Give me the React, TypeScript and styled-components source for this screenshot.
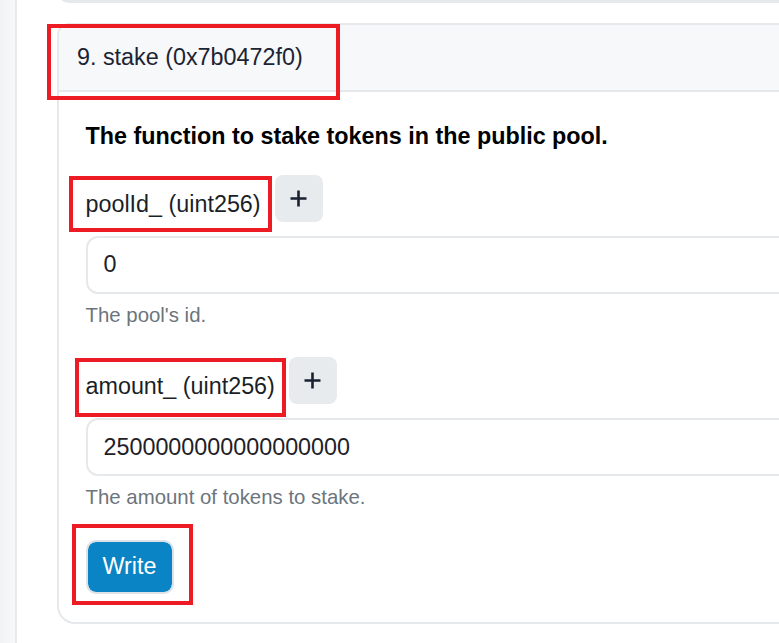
import React from "react";
import styled, { createGlobalStyle } from "styled-components";

const GlobalStyle = createGlobalStyle`
  html, body {
    margin: 0;
    padding: 0;
    overflow: hidden;
    background: linear-gradient(to right, #f2f3f5 0px, #f7f8f9 15px);
    font-family: "Liberation Sans", Arial, sans-serif;
  }
  * { box-sizing: border-box; }
`;

const Page = styled.div`
  display: flex;
  min-height: 643px;
`;

const Panel = styled.main`
  margin-left: 15px;
  border-left: 2px solid #e7e9ec;
  background: #ffffff;
  padding-left: 40px;
  width: 1200px;
  flex-shrink: 0;
  min-height: 643px;
  display: flex;
  flex-direction: column;
  gap: 20px;
`;

const PrevCard = styled.section`
  height: 40px;
  margin-top: -37px;
  flex-shrink: 0;
  border: 2px solid #e6e9ec;
  border-radius: 0 0 12px 12px;
  background: #e6e9ec;
`;

const Card = styled.section`
  border: 2px solid #e6e9ec;
  border-radius: 12px 12px 18px 18px;
  background: #ffffff;
  flex-shrink: 0;
`;

const NextCard = styled.section`
  height: 80px;
  flex-shrink: 0;
  border: 2px solid #e6e9ec;
  border-radius: 12px 12px 0 0;
  background: #f7f8fa;
`;

const CardHeader = styled.header`
  background: #f7f8fa;
  border-bottom: 2px solid #e6e9ec;
  border-radius: 10px 10px 0 0;
  padding: 18px 18px 19px;
  font-size: 23.33px;
  line-height: 28px;
  color: #1c2332;
`;

const Marked = styled.span<{ $t: number; $r: number; $b: number; $l: number }>`
  position: relative;
  display: inline-flex;
  &::after {
    content: "";
    position: absolute;
    top: ${(p) => p.$t}px;
    right: ${(p) => p.$r}px;
    bottom: ${(p) => p.$b}px;
    left: ${(p) => p.$l}px;
    border: 4px solid #ed1c24;
    pointer-events: none;
  }
`;

const Title = styled.span`
  display: block;
`;

const CardBody = styled.div`
  padding: 26.5px 27px 28px 26.5px;
  display: flex;
  flex-direction: column;
  align-items: stretch;
`;

const Description = styled.p`
  margin: 0 0 21px;
  font-size: 23.33px;
  line-height: 35px;
  font-weight: 700;
  color: #000000;
`;

const ParamGroup = styled.div`
  display: flex;
  flex-direction: column;
  margin-bottom: 27px;
`;

const ParamHead = styled.div`
  display: flex;
  align-items: flex-end;
  gap: 14px;
`;

const Label = styled.label`
  display: block;
  font-size: 23.33px;
  line-height: 35px;
  color: #1b1f27;
  white-space: nowrap;
`;

const AddButton = styled.button`
  width: 48px;
  height: 47px;
  border: 0;
  border-radius: 8px;
  background: #e8ebee;
  display: grid;
  place-items: center;
  padding: 0;
  color: #1a2130;
`;

const Field = styled.input`
  margin-top: 14px;
  height: 58px;
  width: 100%;
  border: 2px solid #e6e9ec;
  border-radius: 12px;
  padding: 0 16px;
  font-family: "Liberation Sans", Arial, sans-serif;
  font-size: 23.33px;
  color: #1e2127;
  background: #ffffff;
  outline: none;
`;

const Hint = styled.div`
  margin-top: 6px;
  font-size: 20.4px;
  line-height: 30.6px;
  color: #6c757d;
`;

const ActionRow = styled.div`
  display: flex;
  align-items: flex-start;
`;

const WriteButton = styled.button`
  display: block;
  width: 88px;
  height: 54px;
  padding: 0;
  border: 2px solid #dde2e7;
  border-radius: 10px;
  background: #0a84c4;
  background-clip: padding-box;
  color: #ffffff;
  font-family: "Liberation Sans", Arial, sans-serif;
  font-size: 23.33px;
  line-height: 1;
`;

const PlusIcon = () => (
  <svg width="17" height="17" viewBox="0 0 17 17" aria-hidden="true">
    <path d="M8.5 0.5V16.5M0.5 8.5H16.5" stroke="currentColor" strokeWidth="2.6" fill="none" />
  </svg>
);

type Param = {
  name: string;
  type: string;
  value: string;
  hint: string;
  box: { t: number; r: number; b: number; l: number };
};

const params: Param[] = [
  {
    name: "poolId_",
    type: "uint256",
    value: "0",
    hint: "The pool's id.",
    box: { t: -10.5, r: -11.5, b: -10.5, l: -16.5 },
  },
  {
    name: "amount_",
    type: "uint256",
    value: "2500000000000000000",
    hint: "The amount of tokens to stake.",
    box: { t: -11, r: -11.5, b: -12.5, l: -10.5 },
  },
];

export default function App() {
  return (
    <>
      <GlobalStyle />
      <Page>
        <Panel>
          <PrevCard />
          <Card>
            <CardHeader>
              <Marked $t={-19} $r={-37} $b={-29} $l={-30}>
                <Title>9. stake (0x7b0472f0)</Title>
              </Marked>
            </CardHeader>
            <CardBody>
              <Description>The function to stake tokens in the public pool.</Description>
              {params.map((p) => (
                <ParamGroup key={p.name}>
                  <ParamHead>
                    <Marked $t={p.box.t} $r={p.box.r} $b={p.box.b} $l={p.box.l}>
                      <Label>
                        {p.name} ({p.type})
                      </Label>
                    </Marked>
                    <AddButton type="button">
                      <PlusIcon />
                    </AddButton>
                  </ParamHead>
                  <Field defaultValue={p.value} />
                  <Hint>{p.hint}</Hint>
                </ParamGroup>
              ))}
              <ActionRow>
                <Marked $t={-16} $r={-19.5} $b={-11} $l={-14}>
                  <WriteButton type="button">Write</WriteButton>
                </Marked>
              </ActionRow>
            </CardBody>
          </Card>
          <NextCard />
        </Panel>
      </Page>
    </>
  );
}
